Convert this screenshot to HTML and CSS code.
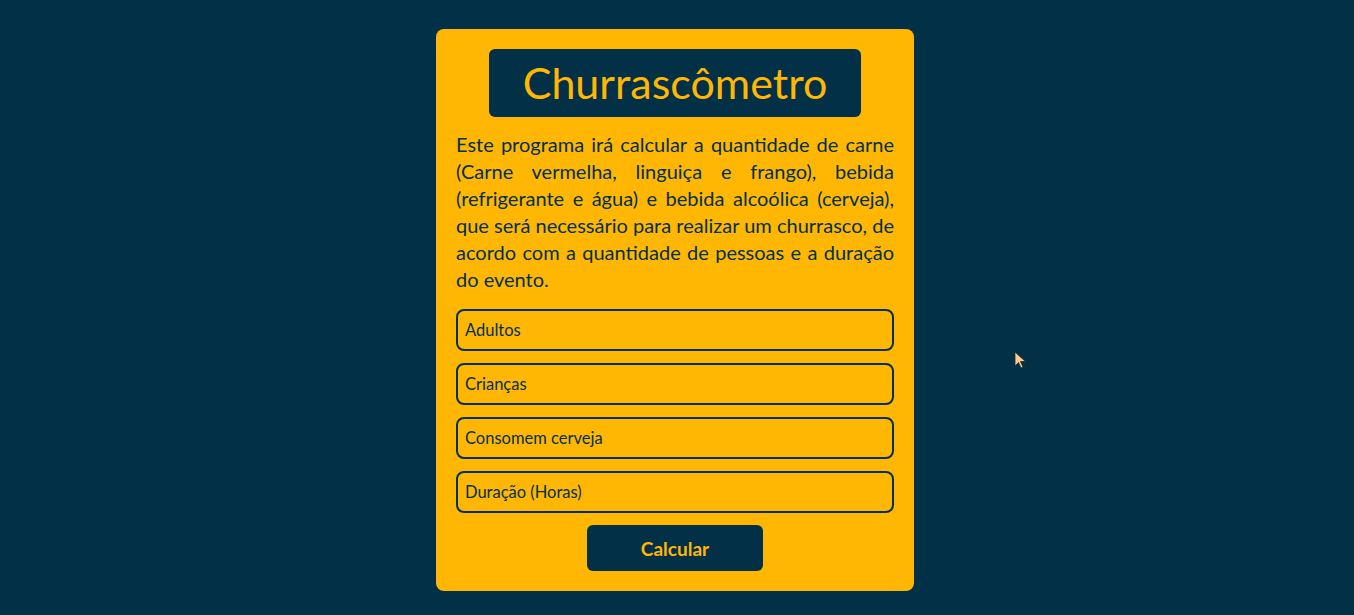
FILE: index.html
```html
<!DOCTYPE html>
<html lang="pt-BR">
<head>
<meta charset="utf-8">
<title>Churrascômetro</title>
<link rel="stylesheet" href="styles.css">
</head>
<body>
<main class="page">
  <section class="card">
    <h1 class="title">Churrascômetro</h1>
    <p class="desc">Este programa irá calcular a quantidade de carne (Carne vermelha, linguiça e frango), bebida (refrigerante e água) e bebida alcoólica (cerveja), que será necessário para realizar um churrasco, de acordo com a quantidade de pessoas e a duração do evento.</p>
    <form class="form">
      <input class="field" type="number" placeholder="Adultos">
      <input class="field" type="number" placeholder="Crianças">
      <input class="field" type="number" placeholder="Consomem cerveja">
      <input class="field" type="number" placeholder="Duração (Horas)">
      <button class="btn" type="button">Calcular</button>
    </form>
  </section>
</main>
<svg class="cursor" width="14" height="20" viewBox="0 0 14 20"><path d="M1 1 L1 15 L4.5 11.5 L7 17 L9 16 L6.5 10.5 L11.5 10.5 Z" fill="#FFCB8E" stroke="#1d2b33" stroke-width="0.8"/></svg>
</body>
</html>
```
FILE: styles.css
```css
* { box-sizing: border-box; }
html, body { margin: 0; padding: 0; }
body {
  background: #023047;
  font-family: Lato, "Open Sans", sans-serif;
  width: 1354px;
  height: 615px;
  overflow: hidden;
  position: relative;
}
.page {
  display: flex;
  justify-content: center;
  padding: 29px 4px 0 0;
}
.card {
  width: 478px;
  background: #FFB703;
  border-radius: 8px;
  padding: 20px;
  display: flex;
  flex-direction: column;
  align-items: center;
}
.title {
  margin: 0;
  width: 372px;
  height: 68px;
  background: #023047;
  color: #FFB703;
  border-radius: 6px;
  font-weight: 400;
  font-size: 43px;
  line-height: 68px;
  text-align: center;
}
.desc {
  margin: 14px 0 0;
  width: 438px;
  color: #023047;
  font-size: 20px;
  line-height: 27px;
  text-align: justify;
}
.form {
  width: 438px;
  margin-top: 16px;
  display: flex;
  flex-direction: column;
  align-items: center;
  gap: 12px;
}
.field {
  width: 100%;
  height: 42px;
  background: transparent;
  border: 2px solid #023047;
  border-radius: 8px;
  padding: 0 7px;
  font-family: inherit;
  font-size: 16.5px;
  color: #023047;
  outline: none;
  appearance: textfield;
  -moz-appearance: textfield;
}
.field::placeholder { color: #023047; opacity: 1; }
.field::-webkit-outer-spin-button,
.field::-webkit-inner-spin-button { -webkit-appearance: none; margin: 0; }
.btn {
  width: 176px;
  height: 46px;
  background: #023047;
  color: #FFB703;
  border: none;
  border-radius: 6px;
  font-family: inherit;
  font-weight: 700;
  font-size: 19px;
}
.cursor {
  position: absolute;
  left: 1014px;
  top: 351px;
}
```
